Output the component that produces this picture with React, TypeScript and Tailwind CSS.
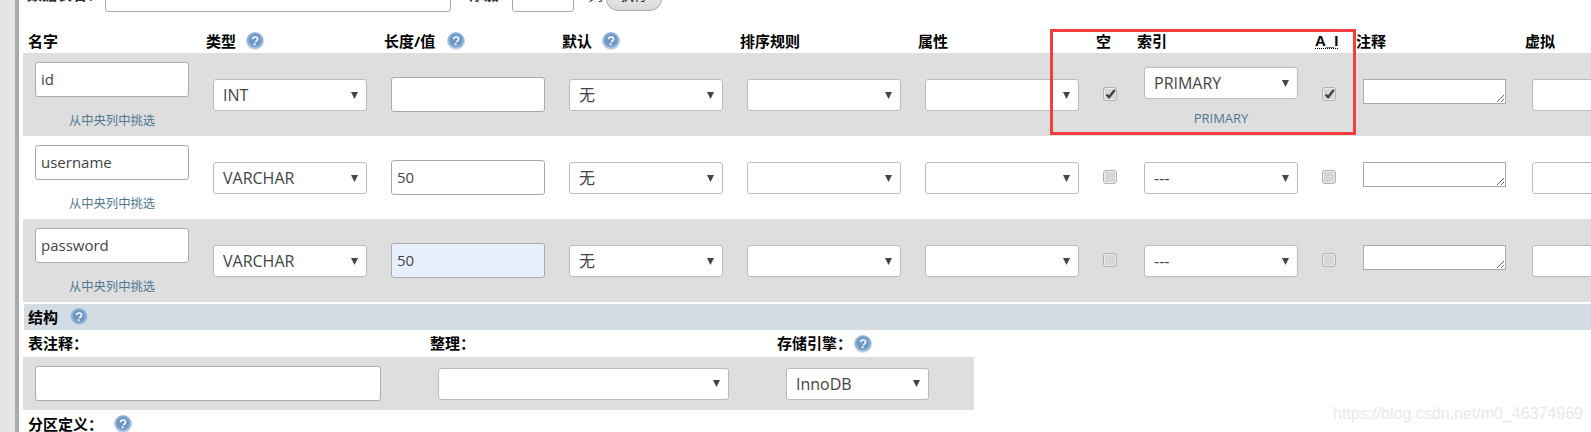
const FONT = "font-['Open_Sans','Noto_Sans_CJK_SC',sans-serif]";
const COLS = "grid grid-cols-[178px_178px_178px_178px_178px_178px_41px_178px_41px_169px_71px]";
const BOTTOM = "grid grid-cols-[403px_348px_200px]";

function Help({ id }: { id: string }) {
  return (
    <svg width="18" height="18" viewBox="0 0 18 18" className="shrink-0">
      <defs>
        <radialGradient id={id} cx="50%" cy="45%" r="52%">
          <stop offset="0%" stopColor="#6a93c5" />
          <stop offset="60%" stopColor="#7099c9" />
          <stop offset="85%" stopColor="#a5c0dd" />
          <stop offset="100%" stopColor="#d5e1ee" />
        </radialGradient>
      </defs>
      <circle cx="9" cy="9" r="9" fill={`url(#${id})`} />
      <path d="M6.6 7.2c.1-1.5 1.1-2.2 2.5-2.2s2.5.8 2.5 2c0 1.8-2.1 1.8-2.1 3.2" fill="none" stroke="#fff" strokeWidth="1.7" />
      <rect x="7.7" y="11.3" width="1.9" height="1.9" fill="#fff" />
    </svg>
  );
}

function Th({ children, help, gap = "gap-[10px]" }: { children?: React.ReactNode; help?: string; gap?: string }) {
  return (
    <div className={`flex items-center ${gap} pl-[5px] h-[24px] text-[15px] font-bold text-black whitespace-nowrap`}>
      <span>{children}</span>
      {help && <Help id={help} />}
    </div>
  );
}

function Select({ value, width = "w-[154px]" }: { value?: string; width?: string }) {
  return (
    <div className={`${width} h-[32px] shrink-0 bg-white border border-[#bbb] rounded-[3px] flex items-center justify-between pl-[9px] pr-[8px] text-[16px] text-[#444] whitespace-nowrap`}>
      <span>{value}</span>
      <svg width="7" height="7" viewBox="0 0 7 7"><path d="M0 0h7L3.5 7z" fill="#444" /></svg>
    </div>
  );
}

function TextInput({ value, h = "h-[35px]", w = "w-[154px]", bg = "bg-white" }: { value?: string; h?: string; w?: string; bg?: string }) {
  return (
    <input
      readOnly
      value={value ?? ""}
      className={`${w} ${h} shrink-0 ${bg} border border-[#aaa] rounded-[3px] pl-[5px] pr-[6px] pb-[2px] text-[15px] text-[#444] outline-none`}
    />
  );
}

function Check({ checked }: { checked?: boolean }) {
  return (
    <div className="w-[14px] h-[14px] mt-[8px] bg-[#d6d6d6] border border-[#b0b0b0] rounded-[3px] shadow-[inset_0_0_0_1px_#eee] flex items-center justify-center">
      {checked && (
        <svg width="11" height="10" viewBox="0 0 11 10">
          <path d="M1.5 5.5l2.6 2.6L9.8 1" fill="none" stroke="#444" strokeWidth="2.4" />
        </svg>
      )}
    </div>
  );
}

function Cell({ children, top = "pt-[26px]" }: { children?: React.ReactNode; top?: string }) {
  return <div className={`pl-3 ${top} flex flex-col items-start`}>{children}</div>;
}

function Row({ name, type, length, lengthBg, shade, primary }: { name: string; type: string; length?: string; lengthBg?: string; shade?: boolean; primary?: boolean }) {
  return (
    <div className={`${COLS} h-[83px] ${shade ? "bg-[#dedede]" : "bg-white"}`}>
      <Cell top="pt-[9px]">
        <TextInput value={name} />
        <a className="w-[154px] mt-[17px] text-center text-[12.3px] leading-[13px] text-[#4f7890]">从中央列中挑选</a>
      </Cell>
      <Cell><Select value={type} /></Cell>
      <Cell top="pt-[24px]"><TextInput value={length} bg={lengthBg} /></Cell>
      <Cell><Select value="无" /></Cell>
      <Cell><Select /></Cell>
      <Cell><Select /></Cell>
      <Cell><Check checked={primary} /></Cell>
      {primary ? (
        <Cell top="pt-[14px]">
          <Select value="PRIMARY" />
          <a className="w-[154px] mt-[12px] text-center text-[13px] leading-[14px] text-[#4f7890]">PRIMARY</a>
        </Cell>
      ) : (
        <Cell><Select value="---" /></Cell>
      )}
      <Cell><Check checked={primary} /></Cell>
      <Cell>
        <textarea readOnly className="w-[143px] h-[25px] bg-white border border-[#aaa] outline-none" />
      </Cell>
      <Cell><Select /></Cell>
    </div>
  );
}

export default function App() {
  return (
    <div className={`relative w-full h-[432px] overflow-hidden bg-white flex ${FONT}`}>
      <div className="w-[15px] shrink-0 bg-[#e4e5e6]" />
      <div className="w-[4px] shrink-0 bg-[#aaa]" />
      <div className="w-[1572px] shrink-0 pl-[4px]">
        <div className="h-[12px] overflow-hidden flex items-end text-[15px] text-[#333] whitespace-nowrap">
          <span className="w-[82px] pl-[4px] font-bold leading-[15px] mb-[10px]">数据表名：</span>
          <TextInput w="w-[346px]" />
          <span className="w-[61px] pl-[18px] font-bold leading-[15px] mb-[10px]">添加</span>
          <TextInput w="w-[62px]" />
          <span className="w-[32px] pl-[14px] leading-[15px] mb-[10px]">列</span>
          <button className="w-[56px] h-[30px] mb-px border border-[#aaa] rounded-[12px] bg-gradient-to-b from-[#f8f8f8] to-[#d8d8d8] text-[13px] text-[#111]">执行</button>
        </div>
        <div className={`${COLS} pt-[17px] h-[41px]`}>
          <Th>名字</Th>
          <Th help="h1">类型</Th>
          <Th help="h2" gap="gap-[12px]">长度/值</Th>
          <Th help="h3">默认</Th>
          <Th>排序规则</Th>
          <Th>属性</Th>
          <Th>空</Th>
          <Th>索引</Th>
          <Th><span className="font-['Liberation_Sans',sans-serif] text-[15px] underline decoration-dotted decoration-1 underline-offset-2">A_I</span></Th>
          <Th>注释</Th>
          <Th>虚拟</Th>
        </div>
        <Row name="id" type="INT" shade primary />
        <Row name="username" type="VARCHAR" length="50" />
        <Row name="password" type="VARCHAR" length="50" lengthBg="bg-[#e8f0fe]" shade />
        <div className="h-[2px]" />
        <div className="ml-[1px] h-[26px] bg-[#d3dce3] flex items-center gap-[12px] pl-[4px] text-[15px] font-bold text-black">
          <span>结构</span>
          <Help id="h4" />
        </div>
        <div className={`${BOTTOM} w-[951px] h-[27px] items-center text-[15px] font-bold text-black`}>
          <span className="pl-[5px]">表注释：</span>
          <span className="pl-[4px]">整理：</span>
          <span className="pl-[3px] flex items-center gap-[2px]">存储引擎：<Help id="h5" /></span>
        </div>
        <div className={`${BOTTOM} w-[951px] h-[53px] bg-[#dedede] items-center`}>
          <div className="pl-3"><TextInput w="w-[346px]" /></div>
          <div className="pl-3"><Select width="w-[291px]" /></div>
          <div className="pl-3"><Select value="InnoDB" width="w-[143px]" /></div>
        </div>
        <div className="h-[26px] pt-[2px] pl-[5px] flex items-center gap-[11px] text-[15px] font-bold text-black">
          <span>分区定义：</span>
          <Help id="h6" />
        </div>
      </div>
      <div className="absolute left-[1050px] top-[29px] w-[306px] h-[106px] border-[3px] border-[#f53d3d]" />
      <div className="absolute left-[1333px] top-[405px] text-[16px] leading-[18px] text-[#e9e9e9] font-['Liberation_Sans',sans-serif] whitespace-nowrap">https://blog.csdn.net/m0_46374969</div>
    </div>
  );
}
